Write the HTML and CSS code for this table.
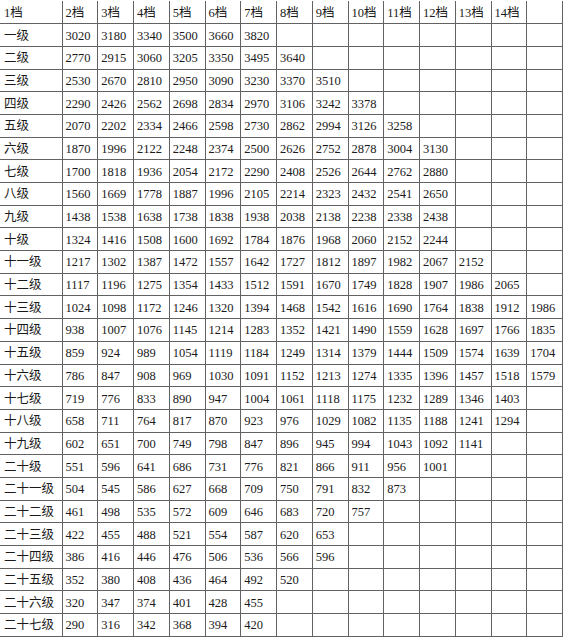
FILE: index.html
```html
<!DOCTYPE html>
<html lang="zh">
<head>
<meta charset="utf-8">
<link rel="stylesheet" href="styles.css">
</head>
<body>
<table class="grade-table">
<colgroup><col class="c-label"><col><col><col><col><col><col><col><col><col><col><col><col><col><col></colgroup>
<tr class="head"><td>1档</td><td>2档</td><td>3档</td><td>4档</td><td>5档</td><td>6档</td><td>7档</td><td>8档</td><td>9档</td><td>10档</td><td>11档</td><td>12档</td><td>13档</td><td>14档</td><td></td></tr>
<tr><td>一级</td><td>3020</td><td>3180</td><td>3340</td><td>3500</td><td>3660</td><td>3820</td><td></td><td></td><td></td><td></td><td></td><td></td><td></td><td></td></tr>
<tr><td>二级</td><td>2770</td><td>2915</td><td>3060</td><td>3205</td><td>3350</td><td>3495</td><td>3640</td><td></td><td></td><td></td><td></td><td></td><td></td><td></td></tr>
<tr><td>三级</td><td>2530</td><td>2670</td><td>2810</td><td>2950</td><td>3090</td><td>3230</td><td>3370</td><td>3510</td><td></td><td></td><td></td><td></td><td></td><td></td></tr>
<tr><td>四级</td><td>2290</td><td>2426</td><td>2562</td><td>2698</td><td>2834</td><td>2970</td><td>3106</td><td>3242</td><td>3378</td><td></td><td></td><td></td><td></td><td></td></tr>
<tr><td>五级</td><td>2070</td><td>2202</td><td>2334</td><td>2466</td><td>2598</td><td>2730</td><td>2862</td><td>2994</td><td>3126</td><td>3258</td><td></td><td></td><td></td><td></td></tr>
<tr><td>六级</td><td>1870</td><td>1996</td><td>2122</td><td>2248</td><td>2374</td><td>2500</td><td>2626</td><td>2752</td><td>2878</td><td>3004</td><td>3130</td><td></td><td></td><td></td></tr>
<tr><td>七级</td><td>1700</td><td>1818</td><td>1936</td><td>2054</td><td>2172</td><td>2290</td><td>2408</td><td>2526</td><td>2644</td><td>2762</td><td>2880</td><td></td><td></td><td></td></tr>
<tr><td>八级</td><td>1560</td><td>1669</td><td>1778</td><td>1887</td><td>1996</td><td>2105</td><td>2214</td><td>2323</td><td>2432</td><td>2541</td><td>2650</td><td></td><td></td><td></td></tr>
<tr><td>九级</td><td>1438</td><td>1538</td><td>1638</td><td>1738</td><td>1838</td><td>1938</td><td>2038</td><td>2138</td><td>2238</td><td>2338</td><td>2438</td><td></td><td></td><td></td></tr>
<tr><td>十级</td><td>1324</td><td>1416</td><td>1508</td><td>1600</td><td>1692</td><td>1784</td><td>1876</td><td>1968</td><td>2060</td><td>2152</td><td>2244</td><td></td><td></td><td></td></tr>
<tr><td>十一级</td><td>1217</td><td>1302</td><td>1387</td><td>1472</td><td>1557</td><td>1642</td><td>1727</td><td>1812</td><td>1897</td><td>1982</td><td>2067</td><td>2152</td><td></td><td></td></tr>
<tr><td>十二级</td><td>1117</td><td>1196</td><td>1275</td><td>1354</td><td>1433</td><td>1512</td><td>1591</td><td>1670</td><td>1749</td><td>1828</td><td>1907</td><td>1986</td><td>2065</td><td></td></tr>
<tr><td>十三级</td><td>1024</td><td>1098</td><td>1172</td><td>1246</td><td>1320</td><td>1394</td><td>1468</td><td>1542</td><td>1616</td><td>1690</td><td>1764</td><td>1838</td><td>1912</td><td>1986</td></tr>
<tr><td>十四级</td><td>938</td><td>1007</td><td>1076</td><td>1145</td><td>1214</td><td>1283</td><td>1352</td><td>1421</td><td>1490</td><td>1559</td><td>1628</td><td>1697</td><td>1766</td><td>1835</td></tr>
<tr><td>十五级</td><td>859</td><td>924</td><td>989</td><td>1054</td><td>1119</td><td>1184</td><td>1249</td><td>1314</td><td>1379</td><td>1444</td><td>1509</td><td>1574</td><td>1639</td><td>1704</td></tr>
<tr><td>十六级</td><td>786</td><td>847</td><td>908</td><td>969</td><td>1030</td><td>1091</td><td>1152</td><td>1213</td><td>1274</td><td>1335</td><td>1396</td><td>1457</td><td>1518</td><td>1579</td></tr>
<tr><td>十七级</td><td>719</td><td>776</td><td>833</td><td>890</td><td>947</td><td>1004</td><td>1061</td><td>1118</td><td>1175</td><td>1232</td><td>1289</td><td>1346</td><td>1403</td><td></td></tr>
<tr><td>十八级</td><td>658</td><td>711</td><td>764</td><td>817</td><td>870</td><td>923</td><td>976</td><td>1029</td><td>1082</td><td>1135</td><td>1188</td><td>1241</td><td>1294</td><td></td></tr>
<tr><td>十九级</td><td>602</td><td>651</td><td>700</td><td>749</td><td>798</td><td>847</td><td>896</td><td>945</td><td>994</td><td>1043</td><td>1092</td><td>1141</td><td></td><td></td></tr>
<tr><td>二十级</td><td>551</td><td>596</td><td>641</td><td>686</td><td>731</td><td>776</td><td>821</td><td>866</td><td>911</td><td>956</td><td>1001</td><td></td><td></td><td></td></tr>
<tr><td>二十一级</td><td>504</td><td>545</td><td>586</td><td>627</td><td>668</td><td>709</td><td>750</td><td>791</td><td>832</td><td>873</td><td></td><td></td><td></td><td></td></tr>
<tr><td>二十二级</td><td>461</td><td>498</td><td>535</td><td>572</td><td>609</td><td>646</td><td>683</td><td>720</td><td>757</td><td></td><td></td><td></td><td></td><td></td></tr>
<tr><td>二十三级</td><td>422</td><td>455</td><td>488</td><td>521</td><td>554</td><td>587</td><td>620</td><td>653</td><td></td><td></td><td></td><td></td><td></td><td></td></tr>
<tr><td>二十四级</td><td>386</td><td>416</td><td>446</td><td>476</td><td>506</td><td>536</td><td>566</td><td>596</td><td></td><td></td><td></td><td></td><td></td><td></td></tr>
<tr><td>二十五级</td><td>352</td><td>380</td><td>408</td><td>436</td><td>464</td><td>492</td><td>520</td><td></td><td></td><td></td><td></td><td></td><td></td><td></td></tr>
<tr><td>二十六级</td><td>320</td><td>347</td><td>374</td><td>401</td><td>428</td><td>455</td><td></td><td></td><td></td><td></td><td></td><td></td><td></td><td></td></tr>
<tr><td>二十七级</td><td>290</td><td>316</td><td>342</td><td>368</td><td>394</td><td>420</td><td></td><td></td><td></td><td></td><td></td><td></td><td></td><td></td></tr>
</table>
</body>
</html>
```

FILE: styles.css
```css
html, body {
  margin: 0;
  padding: 0;
  background: #ffffff;
}
body {
  padding-top: 1px;
}
.grade-table {
  border-collapse: collapse;
  table-layout: fixed;
  width: 563px;
  font-family: "Liberation Serif", "Noto Sans CJK SC", serif;
  font-size: 12.5px;
  color: #1a1a1a;
}
.grade-table .c-label {
  width: 62px;
}
.grade-table tr {
  height: 22.7px;
}
.grade-table td {
  border: 1px solid #626262;
  padding: 1px 0 0 3px;
  line-height: 14px;
  white-space: nowrap;
  overflow: hidden;
  vertical-align: middle;
}
.grade-table tr td:first-child {
  border-left: none;
  padding-left: 4px;
}
.grade-table tr.head td {
  border-top: none;
}
```
